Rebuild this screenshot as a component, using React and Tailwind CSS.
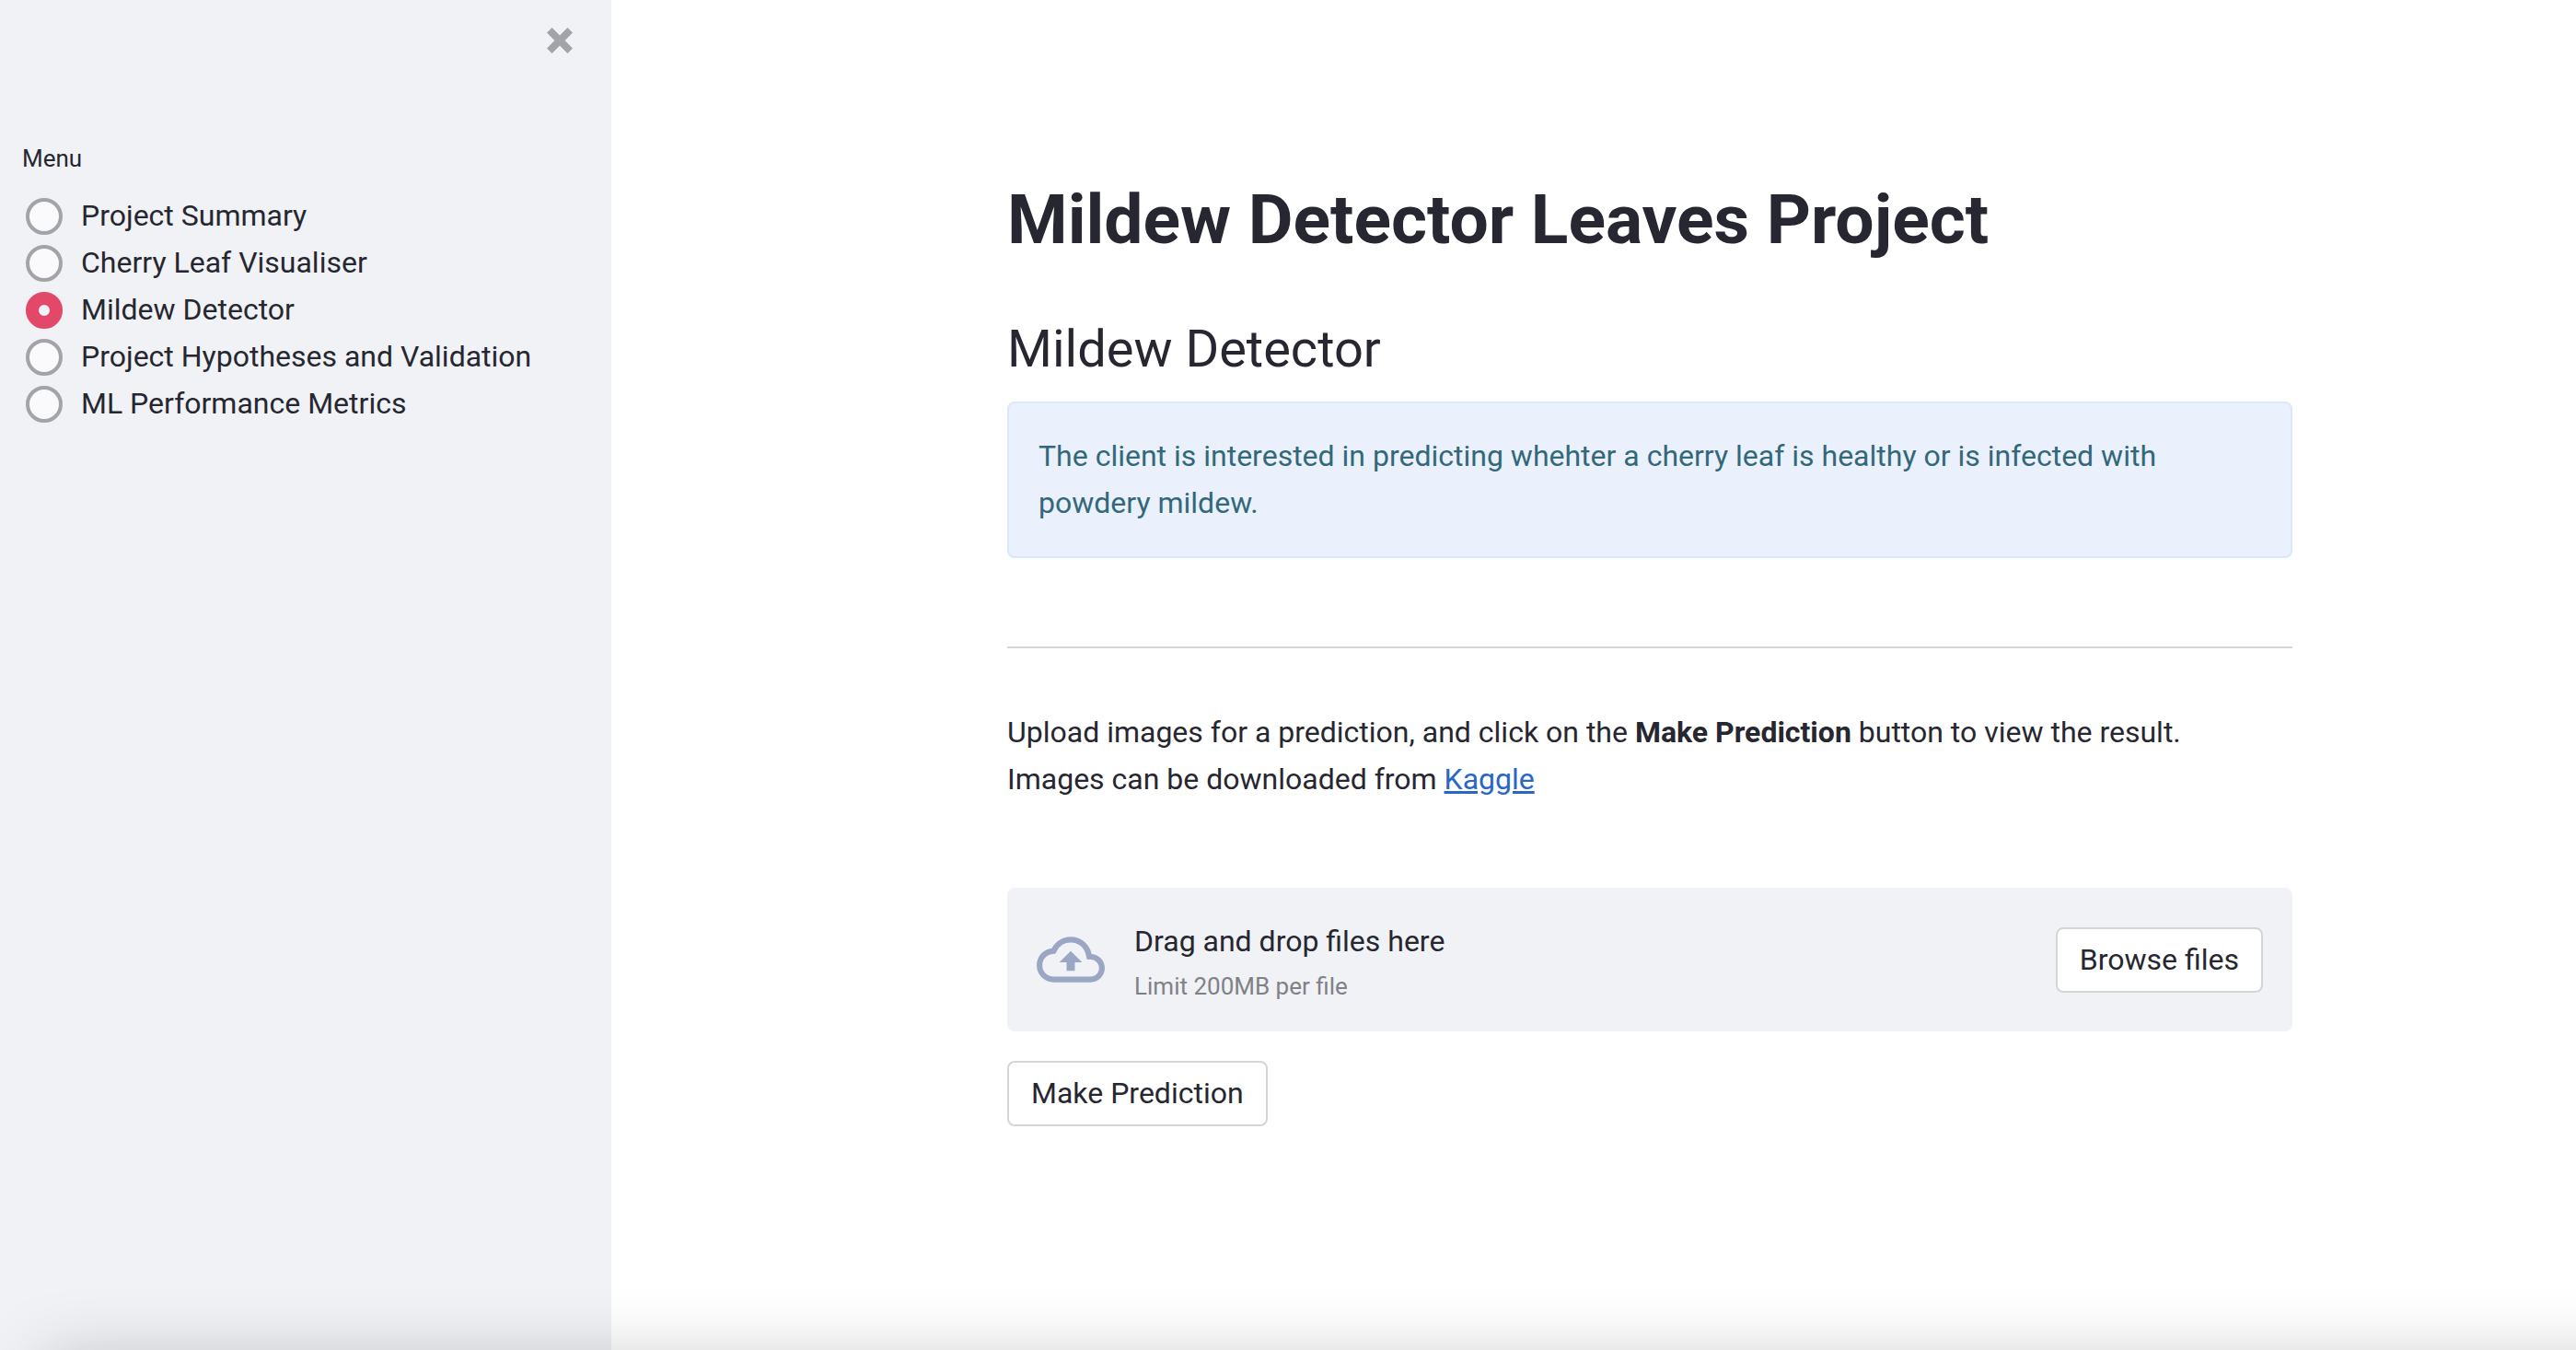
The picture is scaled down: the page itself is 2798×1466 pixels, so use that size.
import { useState } from "react";

const PAGES = [
  "Project Summary",
  "Cherry Leaf Visualiser",
  "Mildew Detector",
  "Project Hypotheses and Validation",
  "ML Performance Metrics",
];

function Sidebar({ page, onSelect }) {
  return (
    <aside className="w-[664px] shrink-0 bg-[#f0f2f6]">
      <div className="flex justify-end pt-5 pr-8">
        <button type="button" aria-label="Close sidebar" className="p-2 text-[#a3a4aa]">
          <svg viewBox="0 0 8 8" className="size-8" fill="currentColor" aria-hidden="true">
            <path d="M1.9.5.5 1.9 2.6 4 .5 6.1 1.9 7.5 4 5.4 6.1 7.5 7.5 6.1 5.4 4 7.5 1.9 6.1.5 4 2.6z" />
          </svg>
        </button>
      </div>
      <fieldset className="mt-[83px] px-6">
        <legend className="mb-4 text-[26px] leading-[42px]">Menu</legend>
        {PAGES.map((name) => (
          <label key={name} className="flex h-[51px] items-center gap-5 pl-1">
            <input
              type="radio"
              name="menu"
              checked={page === name}
              onChange={() => onSelect(name)}
              className="size-10 shrink-0 appearance-none rounded-full border-4 border-[#a3a4aa] bg-[#fafafc] checked:border-[14px] checked:border-[#e34869] checked:bg-[#f0f2f6]"
            />
            <span>{name}</span>
          </label>
        ))}
      </fieldset>
    </aside>
  );
}

function CloudUploadIcon() {
  return (
    <svg viewBox="0 0 24 24" className="size-[74px] shrink-0 text-[#9ba6c4]" fill="currentColor" aria-hidden="true">
      <path d="M19.35 10.04A7.49 7.49 0 0 0 12 4C9.11 4 6.6 5.64 5.35 8.04A5.994 5.994 0 0 0 0 14c0 3.31 2.69 6 6 6h13c2.76 0 5-2.24 5-5 0-2.64-2.05-4.78-4.65-4.96zM19 18H6c-2.21 0-4-1.79-4-4 0-2.05 1.53-3.76 3.56-3.97l1.07-.11.5-.95A5.469 5.469 0 0 1 12 6c2.62 0 4.88 1.86 5.39 4.43l.3 1.5 1.53.11A2.98 2.98 0 0 1 22 15c0 1.65-1.35 3-3 3zM8 13h2.55v3h2.9v-3H16l-4-4z" />
    </svg>
  );
}

function Button({ children }) {
  return (
    <button
      type="button"
      className="h-[71px] shrink-0 rounded-lg border-2 border-[#d4d5d7] bg-white px-6"
    >
      {children}
    </button>
  );
}

export default function App() {
  const [page, setPage] = useState("Mildew Detector");

  return (
    <div className="relative flex min-h-screen overflow-hidden bg-white font-['Roboto',sans-serif] text-[32px] leading-[51px] text-[#262730]">
      <Sidebar page={page} onSelect={setPage} />
      <main className="min-w-0 flex-1 pl-[122px]">
        <div className="mx-auto max-w-[1396px] pt-48">
          <h1 className="text-[75px] leading-[92px] font-bold">Mildew Detector Leaves Project</h1>
          <h2 className="mt-[62px] text-[56px] leading-[66px]">Mildew Detector</h2>
          <div className="mt-6 rounded-lg border-2 border-[#dbe8f8] bg-[#eaf1fc] px-8 py-8 text-[#33687a]">
            The client is interested in predicting whehter a cherry leaf is healthy or is infected with powdery mildew.
          </div>
          <hr className="mt-24 border-t-2 border-[#d4d5d7]" />
          <div className="mt-[66px]">
            <p>
              Upload images for a prediction, and click on the{" "}
              <strong className="font-bold">Make Prediction</strong> button to view the result.
            </p>
            <p>
              Images can be downloaded from{" "}
              <a href="#kaggle" className="text-[#2a66c6] underline">
                Kaggle
              </a>
            </p>
          </div>
          <section className="mt-[92px] flex items-center gap-8 rounded-lg bg-[#f0f2f6] px-8 py-7">
            <CloudUploadIcon />
            <div className="flex min-w-0 flex-1 flex-col gap-1 pt-1.5">
              <div className="leading-[48px]">Drag and drop files here</div>
              <div className="text-[26px] leading-[42px] text-[#808187]">Limit 200MB per file</div>
            </div>
            <Button>Browse files</Button>
          </section>
          <div className="mt-8 pb-24">
            <Button>Make Prediction</Button>
          </div>
        </div>
      </main>
      <div
        aria-hidden="true"
        className="pointer-events-none absolute top-full right-0 left-12 mt-4 -mr-24 h-24 shadow-[0_0_80px_rgba(0,0,0,0.25)]"
      />
    </div>
  );
}
